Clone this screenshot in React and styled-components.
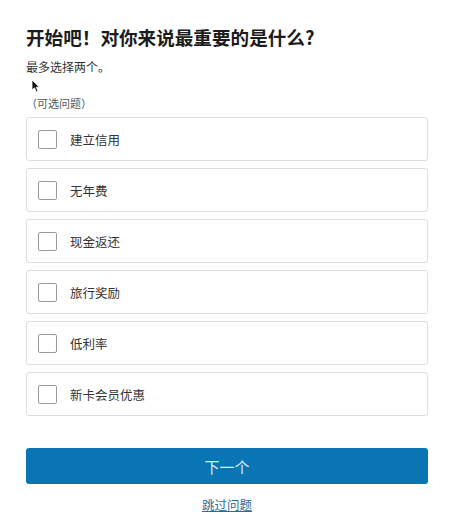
import React, { useState } from "react";
import styled, { createGlobalStyle } from "styled-components";

//Global page reset and font
const GlobalStyle = createGlobalStyle`
  body {
    margin: 0;
    background: #fff;
    font-family: "Noto Sans CJK SC", "Liberation Sans", sans-serif;
  }
`;

export const Page = styled.div`
  position: relative;
  width: 402px;
  padding: 25px 43px 10px 26px;
`;

export const Title = styled.h1`
  margin: 0;
  font-size: 18.6px;
  line-height: 24px;
  font-weight: 700;
  color: #1c1c1c;
`;

export const Subtitle = styled.p`
  margin: 9px 0 0 0;
  font-size: 12px;
  line-height: 17px;
  color: #333;
`;

export const Hint = styled.p`
  margin: 21px 0 0 0;
  font-size: 11px;
  line-height: 14px;
  color: #555;
`;

export const OptionList = styled.div`
  margin-top: 7px;
  display: flex;
  flex-direction: column;
  gap: 7px;
`;

export const Option = styled.label`
  box-sizing: border-box;
  height: 44px;
  display: flex;
  align-items: center;
  gap: 13px;
  padding-left: 11px;
  border: 1px solid #dedede;
  border-radius: 3px;
  background: #fff;
  cursor: pointer;
`;

export const Box = styled.span`
  box-sizing: border-box;
  width: 19px;
  height: 19px;
  border: 1px solid #9a9a9a;
  border-radius: 2px;
  background: ${(p) => (p.checked ? "#0a75b3" : "#fff")};
`;

export const OptionText = styled.span`
  font-size: 12.5px;
  color: #333;
`;

export const NextButton = styled.button`
  margin-top: 32px;
  width: 100%;
  height: 36px;
  border: none;
  border-radius: 3px;
  background: #0a75b3;
  color: #d9edf8;
  font-family: inherit;
  font-size: 15px;
`;

export const SkipLink = styled.a`
  display: block;
  margin-top: 13px;
  text-align: center;
  font-size: 12.5px;
  line-height: 16px;
  color: #2b6c96;
  text-decoration: underline;
`;

export const Pointer = styled.svg`
  position: absolute;
  left: 31px;
  top: 79px;
`;

const options = ["建立信用", "无年费", "现金返还", "旅行奖励", "低利率", "新卡会员优惠"];

export default function App() {
  //selected options
  const [picked, setPicked] = useState([]);

  const toggle = (o) => {
    setPicked((p) => (p.includes(o) ? p.filter((x) => x !== o) : [...p, o].slice(-2)));
  };

  return (
    <Page>
      <GlobalStyle />
      <Title>开始吧！对你来说最重要的是什么?</Title>
      <Subtitle>最多选择两个。</Subtitle>
      <Hint>（可选问题）</Hint>
      <OptionList>
        {options.map((o) => (
          <Option key={o} onClick={() => toggle(o)}>
            <Box checked={picked.includes(o)} />
            <OptionText>{o}</OptionText>
          </Option>
        ))}
      </OptionList>
      <NextButton>下一个</NextButton>
      <SkipLink href="#">跳过问题</SkipLink>
      <Pointer width="9" height="14" viewBox="0 0 9 14">
        <path d="M1 1 L1 11 L3.5 8.8 L5.3 13 L7 12.2 L5.3 8.2 L8.3 8 Z" fill="#111" stroke="#fff" strokeWidth="0.8" />
      </Pointer>
    </Page>
  );
}
